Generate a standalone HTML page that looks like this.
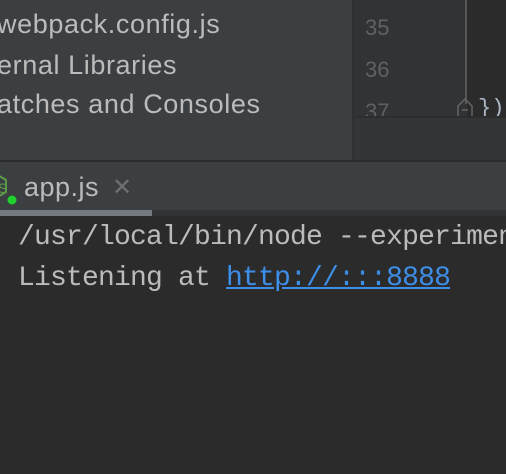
<!DOCTYPE html>
<html><head><style>
body{margin:0;width:506px;height:474px;background:#2b2b2b;overflow:hidden;position:relative;font-family:"Liberation Sans",sans-serif}
div{position:absolute}
.t{color:#bbbbbb;font-size:27px;letter-spacing:0.6px;left:-3px;white-space:nowrap}
.n{color:#5f6265;font-size:22px;left:365px}
.m{font-family:"Liberation Mono",monospace;font-size:28px;letter-spacing:-0.8px;color:#bbbbbb;left:18px;white-space:nowrap}
</style></head><body>
<div style="left:0;top:0;width:352px;height:160px;background:#3c3f41"></div>
<div style="left:352px;top:0;width:2px;height:160px;background:#2e3032"></div>
<div style="left:354px;top:0;width:113px;height:116px;background:#313335"></div>
<div style="left:465px;top:0;width:2px;height:104px;background:#555"></div>
<div style="left:467px;top:0;width:39px;height:116px;background:#2b2b2b"></div>
<div style="left:354px;top:116px;width:152px;height:2px;background:#2c2d2f"></div>
<div style="left:354px;top:118px;width:152px;height:42px;background:#333537"></div>
<div style="left:0;top:160px;width:506px;height:2px;background:#2b2b2b"></div>
<div class="t" style="top:9px">webpack.config.js</div>
<div class="t" style="top:50px">ernal Libraries</div>
<div class="t" style="top:89px">atches and Consoles</div>
<div class="n" style="top:15px">35</div>
<div class="n" style="top:57px">36</div>
<div style="left:354px;top:98px;width:110px;height:18px;overflow:hidden"><div class="n" style="left:11px;top:1px">37</div></div>
<svg style="position:absolute;left:456px;top:96px" width="50" height="20"><path d="M2 20V10l7-7 7 7v10" fill="none" stroke="#666" stroke-width="1.5"/><line x1="6" y1="14" x2="12" y2="14" stroke="#666" stroke-width="1.5"/><text x="22" y="18" fill="#a9b7c6" font-family="Liberation Mono" font-size="22">})</text></svg>
<div style="left:0;top:162px;width:506px;height:48px;background:#3c3f41"></div>
<div style="left:0;top:210px;width:152px;height:6px;background:#747a80"></div>
<div style="left:152px;top:210px;width:354px;height:6px;background:#313335"></div>
<svg style="position:absolute;left:0;top:170px" width="20" height="36"><path d="M-4 4l10 6v12l-10 6" fill="none" stroke="#5a9a4a" stroke-width="2"/><text x="-2" y="23" fill="#5a9a4a" font-size="14">S</text><circle cx="12" cy="30" r="4.5" fill="#1fcf2c"/></svg>
<div style="left:24px;top:172px;color:#bbbbbb;font-size:27px;letter-spacing:0.5px">app.js</div>
<div style="left:112px;top:173px;color:#6e7072;font-size:24px">✕</div>
<div class="m" style="top:222px">/usr/local/bin/node --experimen</div>
<div class="m" style="top:263px">Listening at <span style="color:#3d8ee8;text-decoration:underline">http://:::8888</span></div>
</body></html>
